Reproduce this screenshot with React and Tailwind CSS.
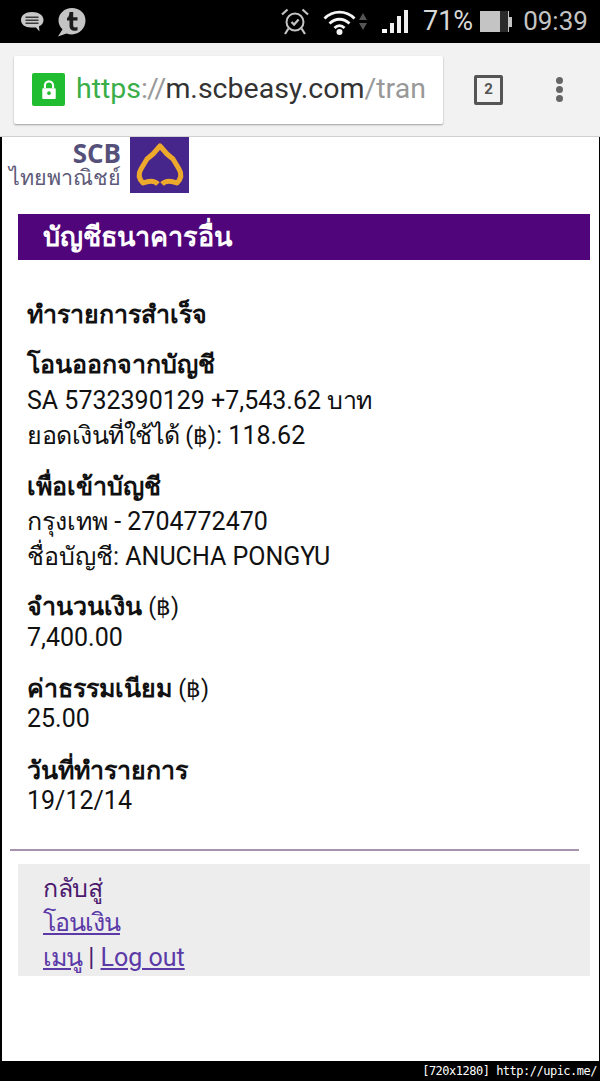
import React from 'react';

// Status bar icons
const ChatIcon = () => (
  <svg width="24" height="22" viewBox="0 0 24 22" className="shrink-0">
    <path d="M12 1C5.500 1 1 4 1 9c0 4.500 4 7.500 10 7.500h5l3.500 4-.5-5.200c3-1.300 4.500-3.500 4.500-6.300C23.500 4 18.500 1 12 1z" fill="#c8c8c8" />
    <path d="M5.500 5.500h13v1.500h-13zM5.500 8.500h13v1.500h-13zM5.500 11.500h13v1.500h-13z" fill="#3a3a3a" />
  </svg>
);

const TumblrIcon = () => (
  <svg width="29" height="30" viewBox="0 0 29 30" className="shrink-0">
    <path d="M15 1C7.500 1 1.500 6.500 1.500 13.500c0 3.500 1.500 6.500 4 8.800L1 29.500l8.500-3c1.700.6 3.500.9 5.500.9 7.500 0 13.500-6.300 13.500-13.900S22.500 1 15 1z" fill="#c4c4c4" />
    <path d="M12.500 5h3.700v5.300h4.300v3.200h-4.300v5c0 2 1.800 2.500 4.300 1.500v3.300c-4.500 1.500-8-.2-8-4.300v-5.500H10v-2.500c1.700-.8 2.300-3 2.500-6z" fill="#1c1c1c" />
  </svg>
);

const AlarmIcon = () => (
  <svg width="30" height="27" viewBox="0 0 30 27" fill="none" stroke="#c4c4c4" strokeWidth="2" className="shrink-0">
    <circle cx="15" cy="14" r="8.500" />
    <path d="M11.500 14l2.600 2.600 4.500-5" strokeWidth="2.200" />
    <path d="M2 6.500L7.500 1.500M28 6.500l-5.500-5M8.500 20.500L5 26M21.500 20.500L25 26" strokeWidth="2.200" />
  </svg>
);

const WifiIcon = () => (
  <svg width="33" height="27" viewBox="0 0 33 27" fill="none" stroke="#f5f5f5" strokeWidth="2.800" className="shrink-0">
    <path d="M1.500 10.500C10 2 23 2 31.500 10.500" />
    <path d="M6.500 15.500c5.700-5.700 14.300-5.700 20 0" />
    <path d="M11.500 20c3-3 7-3 10 0" />
    <circle cx="16.500" cy="24" r="3" fill="#f5f5f5" stroke="none" />
  </svg>
);

const SignalIcon = () => (
  <div className="flex items-end gap-[3px] h-[23px] w-[28px] shrink-0">
    <div className="w-[5px] h-[4px] bg-white" />
    <div className="w-[4px] h-[10px] bg-[#f0f0f0]" />
    <div className="w-[4px] h-[17px] bg-[#f0f0f0]" />
    <div className="w-[4px] h-[23px] bg-[#f0f0f0]" />
  </div>
);

const BatteryIcon = () => (
  <div className="flex items-center shrink-0">
    <div className="w-[29px] h-[21px] flex bg-[#2a2a2a]">
      <div className="w-[20px] bg-[#c4c4c4]" />
      <div className="w-[8px] bg-[#2a2a2a]" />
      <div className="w-[1px] bg-[#c4c4c4]" />
    </div>
    <div className="w-[3px] h-[10px] bg-[#c4c4c4]" />
  </div>
);

const ScbLogo = () => (
  <svg width="59" height="56" viewBox="0 0 59 56" className="shrink-0">
    <rect width="59" height="56" fill="#46268a" />
    <path
      d="M28 47C24 43 18 44 13 46C9 42 8 37 11 32L17 22L23 17L30 9L37 17L43 22L49 32C52 37 51 42 47 46C42 44 36 43 32 47"
      fill="none"
      stroke="#eda92c"
      strokeWidth="5"
      strokeLinejoin="round"
    />
  </svg>
);

const Label = ({ children }) => <div className="font-bold text-[25px] leading-[34px] h-[34px]">{children}</div>;
const Value = ({ children }) => <div className="text-[25px] leading-[35px] h-[35px]">{children}</div>;
const Plain = ({ children }) => <div className="text-[25px] leading-[26px] h-[26px]">{children}</div>;

export default function App() {
  return (
    <div className="w-[600px] h-[1081px] bg-black flex flex-col overflow-hidden font-['Roboto','Noto_Sans',sans-serif]">
      {/* Status bar */}
      <div className="h-[43px] shrink-0 flex items-center pl-[20px]">
        <ChatIcon />
        <div className="ml-[13px] shrink-0"><TumblrIcon /></div>
        <div className="ml-[194px] shrink-0"><AlarmIcon /></div>
        <div className="ml-[13px] shrink-0"><WifiIcon /></div>
        <div className="ml-[3px] flex flex-col gap-[3px] shrink-0">
          <div className="w-0 h-0 border-x-[4px] border-x-transparent border-b-[7px] border-b-[#555]" />
          <div className="w-0 h-0 border-x-[4px] border-x-transparent border-t-[7px] border-t-[#555]" />
        </div>
        <div className="ml-[15px]"><SignalIcon /></div>
        <span className="ml-[13px] text-[27px] text-[#d8d8d8] shrink-0">71%</span>
        <div className="ml-[7px]"><BatteryIcon /></div>
        <span className="ml-[11px] text-[26px] text-[#c4c4c4] shrink-0">09:39</span>
      </div>

      {/* Browser toolbar */}
      <div className="h-[94px] shrink-0 bg-[#f2f2f2] border-b border-[#d0d0d0] flex items-center pl-[14px]">
        <div className="w-[429px] h-[68px] bg-white rounded-[2px] shadow-[0_1px_2px_rgba(0,0,0,0.35)] flex items-center pl-[18px] overflow-hidden">
          <div className="w-[33px] h-[33px] shrink-0 bg-[#1fbd2f] rounded-[2px] flex items-center justify-center">
            <svg width="18" height="22" viewBox="0 0 20 24">
              <path d="M5.500 10V7a4.500 4.500 0 0 1 9 0v3" fill="none" stroke="#fff" strokeWidth="2.400" />
              <rect x="2.500" y="10" width="15" height="12" rx="1" fill="#fff" />
              <circle cx="10" cy="15.500" r="2" fill="#1fbd2f" />
            </svg>
          </div>
          <div className="ml-[11px] text-[28.500px] whitespace-nowrap w-[350px] overflow-hidden">
            <span className="text-[#3aae48]">https</span>
            <span className="text-[#999] tracking-[-1px]">://</span>
            <span className="text-[#333]">m.scbeasy.com</span>
            <span className="text-[#999]">/tran</span>
          </div>
        </div>
        <div className="ml-[31px] w-[29px] h-[30px] border-[3px] border-[#555] rounded-[2px] flex items-center justify-center text-[15px] font-bold text-[#555]">2</div>
        <div className="ml-[53px] flex flex-col gap-[2px]">
          <div className="w-[7px] h-[7px] rounded-full bg-[#666]" />
          <div className="w-[7px] h-[7px] rounded-full bg-[#666]" />
          <div className="w-[7px] h-[7px] rounded-full bg-[#666]" />
        </div>
      </div>

      {/* Page */}
      <div className="h-[924px] shrink-0 bg-white ml-[2px] mr-[1px] text-[#111] flex flex-col">
        <div className="flex h-[57px] shrink-0">
          <div className="w-[119px] flex flex-col items-end text-[#5c5a78]">
            <div className="font-['Open_Sans',sans-serif] font-bold text-[26px] leading-[24px] mt-[4px] text-[#55507a]">SCB</div>
            <div className="text-[21.500px] leading-[22px] mt-[2px] whitespace-nowrap">ไทยพาณิชย์</div>
          </div>
          <div className="ml-[9px]"><ScbLogo /></div>
        </div>

        <div className="mt-[20px] ml-[16px] mr-[9px] h-[46px] bg-[#50057a] text-white font-bold text-[27px] leading-[46px] pl-[25px] shrink-0">บัญชีธนาคารอื่น</div>

        <div className="mt-[38px] ml-[25px] flex flex-col">
          <Label>ทำรายการสำเร็จ</Label>
          <div className="mt-[16px]"><Label>โอนออกจากบัญชี</Label></div>
          <div className="mt-[1px]"><Value>SA 5732390129 +7,543.62 <span className="tracking-[-0.5px]">บาท</span></Value></div>
          <Value><span className="tracking-[-0.5px]">ยอดเงินที่ใช้ได้ </span><span className="text-[23px]">(฿)</span>: 118.62</Value>
          <div className="mt-[17px]"><Label>เพื่อเข้าบัญชี</Label></div>
          <Value>กรุงเทพ - 2704772470</Value>
          <Value>ชื่อบัญชี: ANUCHA PONGYU</Value>
          <div className="mt-[16px]"><Label>จำนวนเงิน <span className="font-normal text-[23px]">(฿)</span></Label></div>
          <div className="mt-[1px]"><Plain>7,400.00</Plain></div>
          <div className="mt-[21px]"><Label>ค่าธรรมเนียม <span className="font-normal text-[23px]">(฿)</span></Label></div>
          <Plain>25.00</Plain>
          <div className="mt-[22px]"><Label>วันที่ทำรายการ</Label></div>
          <Plain>19/12/14</Plain>
        </div>

        <div className="mt-[35px] ml-[8px] mr-[20px] h-[2px] bg-[#a793ad] shrink-0" />

        <div className="mt-[13px] ml-[16px] mr-[9px] h-[112px] bg-[#ededed] pl-[25px] text-[25px] shrink-0">
          <div className="leading-[35px] pt-[7px] h-[41px] text-[#4c1a6e] tracking-[-0.5px]">กลับสู่</div>
          <a className="block leading-[35px] text-[#5b3aa8] underline tracking-[-1px]">โอนเงิน</a>
          <div className="leading-[35px] text-[#4c1a6e]">
            <a className="text-[#5b3aa8] underline tracking-[-1px]">เมนู</a> | <a className="text-[#5b3aa8] underline">Log out</a>
          </div>
        </div>
      </div>

      {/* Watermark */}
      <div className="flex-1 flex justify-end items-center pr-[3px] text-[12px] text-white font-['DejaVu_Sans_Mono',monospace] tracking-[-0.5px]">[720x1280] http://upic.me/</div>
    </div>
  );
}
